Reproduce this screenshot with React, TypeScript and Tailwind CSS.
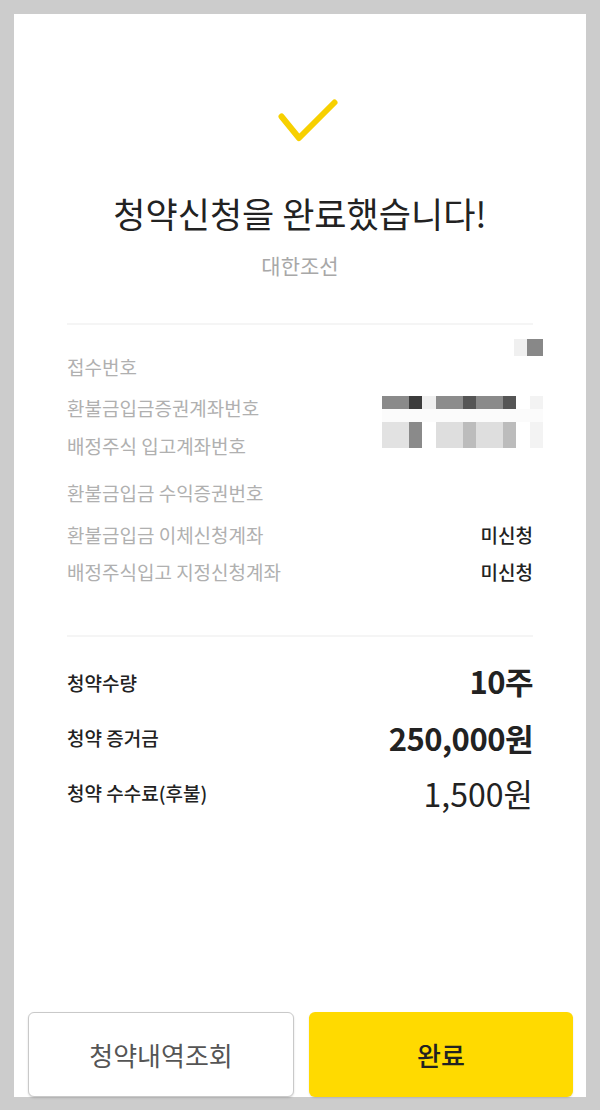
import React from 'react';

const font = { fontFamily: '"Noto Sans CJK KR", "Noto Sans", sans-serif' };

const mosaicTop = ['#8a8a8a', '#8a8a8a', '#3c3c3c', '#efefef', '#8c8c8c', '#8c8c8c', '#555555', '#8a8a8a', '#8a8a8a', '#555555', '#ffffff', '#f3f3f3'];
const mosaicBottom = ['#e2e2e2', '#e2e2e2', '#8a8a8a', '#ffffff', '#dedede', '#dedede', '#bcbcbc', '#dedede', '#dedede', '#bcbcbc', '#ffffff', '#f3f3f3'];

function Mosaic({ cells, faint }: { cells: string[]; faint?: boolean }) {
  return (
    <div className="w-[161px]">
      <div className="grid grid-cols-12 h-[13px]">
        {cells.map((c, i) => (
          <div key={i} style={{ backgroundColor: c }} />
        ))}
      </div>
      {faint && <div className="h-[13px] bg-[#fbfbfb]" />}
    </div>
  );
}

export default function App() {
  return (
    <div className="w-[600px] h-[1110px] bg-[#cccccc] pt-[14px]" style={font}>
      <div className="mx-[14px] h-[1083px] bg-white flex flex-col">
        <div className="flex justify-center mt-[81px]">
          <svg width="72" height="50" viewBox="0 0 72 50" className="ml-[8px]">
            <path d="M13.5 21.5 L31 43 L66.5 7.5" fill="none" stroke="#f7d000" strokeWidth="6" strokeLinecap="round" strokeLinejoin="round" />
          </svg>
        </div>
        <h1 className="mt-[48px] text-center text-[35px] leading-[40px] text-[#222222]">청약신청을 완료했습니다!</h1>
        <p className="mt-[19px] text-center text-[21px] leading-[26px] text-[#a8a8a8]">대한조선</p>

        <div className="mx-[53px]">
          <div className="mt-[45px] h-[2px] bg-[#f5f5f5]" />

          <div className="text-[19px] leading-[26px] text-[#b0b0b0]">
            <div className="mt-[29px] h-[26px] flex justify-between items-start">
              <span>접수번호</span>
              <div className="-mt-[15px] h-[17px] flex mr-[-10px]">
                <div className="w-[13px] bg-[#f0f0f0]" />
                <div className="w-[16px] bg-[#888888]" />
              </div>
            </div>
            <div className="mt-[15px] h-[26px] flex justify-between items-start">
              <span>환불금입금증권계좌번호</span>
              <div className="mt-[1px] mr-[-10px]">
                <Mosaic cells={mosaicTop} faint />
              </div>
            </div>
            <div className="mt-[12px] h-[26px] flex justify-between items-start">
              <span>배정주식 입고계좌번호</span>
              <div className="-mt-[11px] mr-[-10px] h-[26px] grid grid-cols-12 w-[161px]">
                {mosaicBottom.map((c, i) => (
                  <div key={i} style={{ backgroundColor: c }} />
                ))}
              </div>
            </div>
            <div className="mt-[21px] h-[26px] flex justify-between">
              <span>환불금입금 수익증권번호</span>
            </div>
            <div className="mt-[16px] h-[26px] flex justify-between items-center">
              <span>환불금입금 이체신청계좌</span>
              <span className="text-[#222222] font-medium">미신청</span>
            </div>
            <div className="mt-[11px] h-[26px] flex justify-between items-center">
              <span>배정주식입고 지정신청계좌</span>
              <span className="text-[#222222] font-medium">미신청</span>
            </div>
          </div>

          <div className="mt-[50px] h-[2px] bg-[#f5f5f5]" />

          <div className="text-[#222222]">
            <div className="mt-[28px] h-[36px] flex justify-between items-center">
              <span className="text-[19px] font-medium">청약수량</span>
              <span className="text-[31px] font-bold tracking-[-0.5px] -mt-[3px]">10주</span>
            </div>
            <div className="mt-[19px] h-[36px] flex justify-between items-center">
              <span className="text-[19px] font-medium">청약 증거금</span>
              <span className="text-[31px] font-bold tracking-[-0.5px]">250,000원</span>
            </div>
            <div className="mt-[19px] h-[36px] flex justify-between items-center">
              <span className="text-[19px] font-medium">청약 수수료(후불)</span>
              <span className="text-[32px]">1,500원</span>
            </div>
          </div>
        </div>

        <div className="mt-auto flex gap-[15px] pl-[14px] pr-[13px]">
          <button className="flex-1 h-[85px] rounded-[6px] border-[1.5px] border-[#c9c9c9] bg-white shadow-[0_1px_2px_rgba(0,0,0,0.15)] text-[26px] text-[#555555]">
            청약내역조회
          </button>
          <button className="flex-1 h-[85px] rounded-[6px] bg-[#ffda00] shadow-[0_1px_2px_rgba(0,0,0,0.12)] text-[26px] font-medium text-[#222222]">
            완료
          </button>
        </div>
      </div>
    </div>
  );
}
